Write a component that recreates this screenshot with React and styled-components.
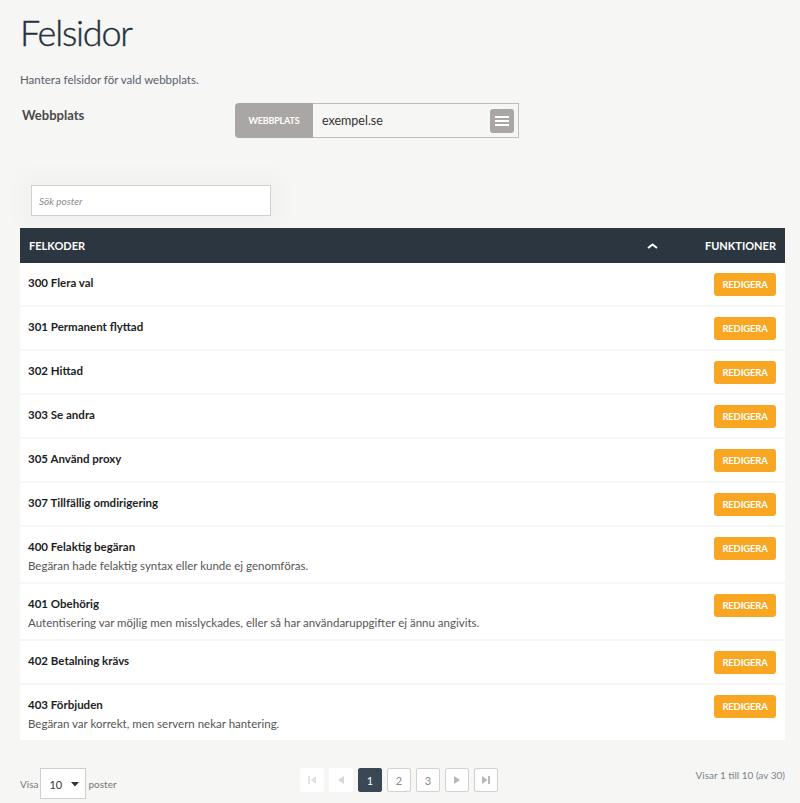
import React from "react";
import styled, { createGlobalStyle } from "styled-components";

const Global = createGlobalStyle`
  html, body { margin: 0; padding: 0; background: #f6f6f4; }
  body { font-family: Lato, "Liberation Sans", sans-serif; color: #333; }
  * { box-sizing: border-box; }
`;

const Page = styled.div`
  padding: 10px 15px 4px 20px;
  min-height: 803px;
`;

const Title = styled.h1`
  margin: 0;
  font-size: 36px;
  font-weight: 300;
  line-height: 44px;
  color: #27303a;
  letter-spacing: -1.2px;
  -webkit-text-stroke: 0.4px #27303a;
`;

const Lead = styled.p`
  margin: 15px 0 0;
  font-size: 11.5px;
  line-height: 22px;
  color: #56606b;
`;

const SiteRow = styled.div`
  display: flex;
  align-items: flex-start;
  margin-top: 12px;
`;

const SiteLabel = styled.div`
  width: 215px;
  padding: 3px 0 0 2px;
  font-size: 13px;
  font-weight: 700;
  line-height: 18px;
  color: #4a4a4a;
`;

const InputGroup = styled.div`
  display: flex;
  width: 284px;
  height: 35px;
`;

const Addon = styled.div`
  width: 78px;
  background: #aaa6a3;
  color: #fff;
  font-size: 9px;
  font-weight: 700;
  display: flex;
  align-items: center;
  justify-content: center;
  border-radius: 4px 0 0 4px;
  letter-spacing: -0.2px;
`;

const SiteField = styled.div`
  flex: 1;
  display: flex;
  align-items: center;
  justify-content: space-between;
  border: 1px solid #bdbdbd;
  border-left: none;
  padding: 0 4px 0 9px;
  font-size: 12.5px;
  color: #333;
`;

const MenuBtn = styled.div`
  width: 24px;
  height: 24px;
  border-radius: 3px;
  background: #aaa6a3;
  display: flex;
  align-items: center;
  justify-content: center;
`;

const SearchWrap = styled.div`
  margin: 47px 0 0 11px;
  width: 240px;
  box-shadow: 0 0 22px 10px rgba(0, 0, 0, 0.025);
`;

const Search = styled.input`
  display: block;
  width: 240px;
  height: 31px;
  border: 1px solid #d0d0d0;
  background: #fff;
  padding: 0 7px;
  font-family: Lato, "Liberation Sans", sans-serif;
  font-size: 10px;
  font-style: italic;
  outline: none;
  &::placeholder { color: #8a8a8a; }
`;

const Table = styled.div`
  margin-top: 12px;
  display: flex;
  flex-direction: column;
  gap: 2px;
`;

const Head = styled.div`
  height: 35px;
  background: #2c3640;
  color: #fff;
  display: flex;
  align-items: center;
  padding: 0 9px 0 9px;
  font-size: 11px;
  font-weight: 700;
  margin-bottom: -2px;
`;

const HeadMain = styled.div`
  flex: 1;
`;

const SortIcon = styled.div`
  width: 58px;
  display: flex;
  justify-content: flex-start;
`;

const Row = styled.div`
  background: #fff;
  display: flex;
  align-items: flex-start;
  justify-content: space-between;
  padding: 10px 9px 7px 8px;
`;

const Cell = styled.div`
  display: flex;
  flex-direction: column;
`;

const Code = styled.div`
  font-size: 11.5px;
  font-weight: 700;
  line-height: 20px;
  color: #1e1e1e;
`;

const Desc = styled.div`
  font-size: 11.5px;
  line-height: 18px;
  color: #555;
`;

const EditBtn = styled.button`
  width: 62px;
  height: 23px;
  margin-bottom: 2px;
  border: none;
  border-radius: 3px;
  background: #f9a723;
  color: #fff;
  font-family: Lato, "Liberation Sans", sans-serif;
  font-size: 9.5px;
  font-weight: 700;
  padding: 0;
  letter-spacing: -0.2px;
`;

const Footer = styled.div`
  margin-top: 28px;
  display: grid;
  grid-template-columns: 1fr auto 1fr;
  align-items: start;
`;

const Length = styled.div`
  display: flex;
  align-items: center;
  gap: 2px;
  font-size: 10px;
  color: #777;
`;

const Select = styled.div`
  width: 46px;
  height: 31px;
  border: 1px solid #cfcfcf;
  background: #fff;
  display: flex;
  align-items: center;
  justify-content: space-between;
  padding: 2px 6px 0 8px;
  font-size: 11px;
  color: #333;
`;

const Pager = styled.div`
  display: flex;
  gap: 5px;
  margin-right: 7px;
`;

const PageBtn = styled.div`
  width: 24px;
  height: 24px;
  border-radius: 2px;
  display: flex;
  align-items: center;
  justify-content: center;
  font-size: 11px;
  color: ${(p) => (p.$active ? "#fff" : "#888")};
  background: ${(p) => (p.$active ? "#3a4755" : "#fff")};
  border: 1px solid ${(p) => (p.$active ? "#3a4755" : p.$disabled ? "#fff" : "#d2d2d2")};
`;

const Info = styled.div`
  justify-self: end;
  font-size: 10px;
  color: #7a838c;
  padding-top: 1px;
`;

const rows = [
  ["300 Flera val"],
  ["301 Permanent flyttad"],
  ["302 Hittad"],
  ["303 Se andra"],
  ["305 Använd proxy"],
  ["307 Tillfällig omdirigering"],
  ["400 Felaktig begäran", "Begäran hade felaktig syntax eller kunde ej genomföras."],
  ["401 Obehörig", "Autentisering var möjlig men misslyckades, eller så har användaruppgifter ej ännu angivits."],
  ["402 Betalning krävs"],
  ["403 Förbjuden", "Begäran var korrekt, men servern nekar hantering."],
];

const Tri = ({ dir, color }) => (
  <svg width="10" height="10" viewBox="0 0 10 10">
    {dir === "left" ? (
      <path d="M8 1 L2 5 L8 9 Z" fill={color} />
    ) : (
      <path d="M2 1 L8 5 L2 9 Z" fill={color} />
    )}
  </svg>
);

const Edge = ({ dir, color }) => (
  <svg width="10" height="10" viewBox="0 0 10 10">
    {dir === "left" ? (
      <>
        <rect x="1" y="1" width="2" height="8" fill={color} />
        <path d="M9 1 L3.5 5 L9 9 Z" fill={color} />
      </>
    ) : (
      <>
        <rect x="7" y="1" width="2" height="8" fill={color} />
        <path d="M1 1 L6.5 5 L1 9 Z" fill={color} />
      </>
    )}
  </svg>
);

export default function App() {
  return (
    <>
      <Global />
      <Page>
        <Title>Felsidor</Title>
        <Lead>Hantera felsidor för vald webbplats.</Lead>
        <SiteRow>
          <SiteLabel>Webbplats</SiteLabel>
          <InputGroup>
            <Addon>WEBBPLATS</Addon>
            <SiteField>
              <span>exempel.se</span>
              <MenuBtn>
                <svg width="14" height="12" viewBox="0 0 14 12">
                  <rect x="0" y="1" width="14" height="2" fill="#fff" />
                  <rect x="0" y="5" width="14" height="2" fill="#fff" />
                  <rect x="0" y="9" width="14" height="2" fill="#fff" />
                </svg>
              </MenuBtn>
            </SiteField>
          </InputGroup>
        </SiteRow>
        <SearchWrap>
          <Search placeholder="Sök poster" />
        </SearchWrap>
        <Table>
          <Head>
            <HeadMain>FELKODER</HeadMain>
            <SortIcon>
              <svg width="11" height="6" viewBox="0 0 11 6">
                <path d="M1 5 L5.5 1.5 L10 5" stroke="#fff" strokeWidth="2" fill="none" />
              </svg>
            </SortIcon>
            <div>FUNKTIONER</div>
          </Head>
          {rows.map(([code, desc]) => (
            <Row key={code}>
              <Cell>
                <Code>{code}</Code>
                {desc && <Desc>{desc}</Desc>}
              </Cell>
              <EditBtn>REDIGERA</EditBtn>
            </Row>
          ))}
        </Table>
        <Footer>
          <Length>
            <span>Visa</span>
            <Select>
              <span>10</span>
              <svg width="8" height="5" viewBox="0 0 8 5">
                <path d="M0 0 L8 0 L4 4.5 Z" fill="#333" />
              </svg>
            </Select>
            <span>poster</span>
          </Length>
          <Pager>
            <PageBtn $disabled><Edge dir="left" color="#e2e2e2" /></PageBtn>
            <PageBtn $disabled><Tri dir="left" color="#d8d8d8" /></PageBtn>
            <PageBtn $active>1</PageBtn>
            <PageBtn>2</PageBtn>
            <PageBtn>3</PageBtn>
            <PageBtn><Tri dir="right" color="#b8b8b8" /></PageBtn>
            <PageBtn><Edge dir="right" color="#b8b8b8" /></PageBtn>
          </Pager>
          <Info>Visar 1 till 10 (av 30)</Info>
        </Footer>
      </Page>
    </>
  );
}
